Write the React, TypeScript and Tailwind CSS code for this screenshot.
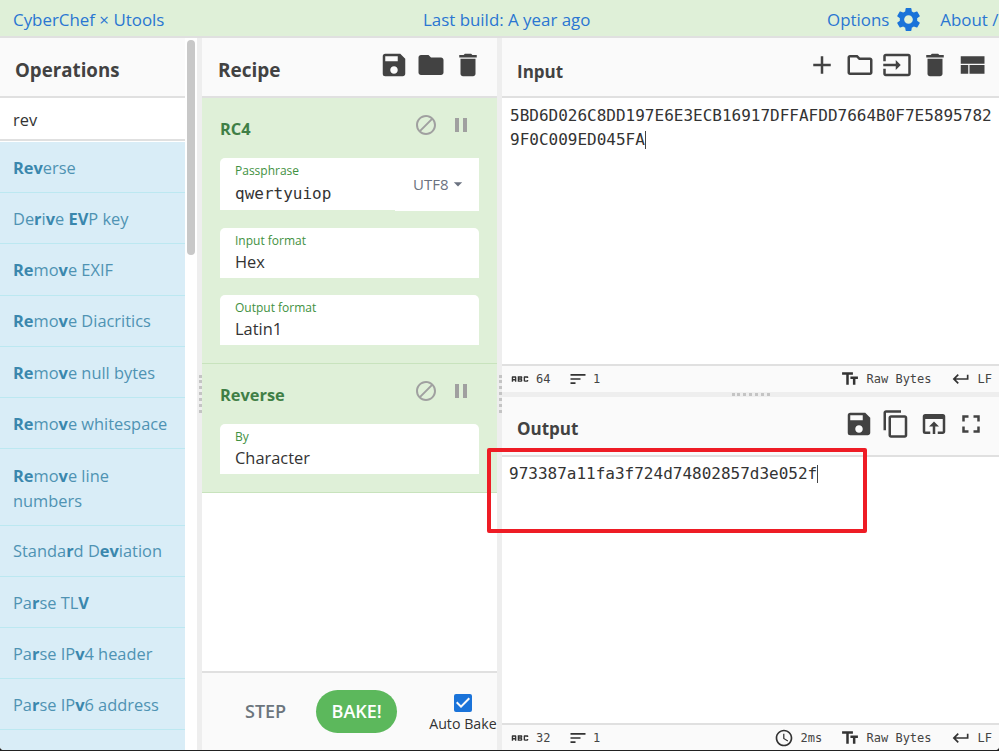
import {
  MdAbc,
  MdAccessTime,
  MdAdd,
  MdArrowDropDown,
  MdBlock,
  MdCheckBox,
  MdContentCopy,
  MdDelete,
  MdFolder,
  MdFullscreen,
  MdInput,
  MdKeyboardReturn,
  MdOpenInBrowser,
  MdOutlineFolder,
  MdPause,
  MdSave,
  MdSettings,
  MdSort,
  MdTextFields,
} from "react-icons/md";

const ops: { parts: [string, boolean][]; tall?: boolean }[] = [
  { parts: [["Rev", true], ["erse", false]] },
  { parts: [["De", false], ["r", true], ["i", false], ["v", true], ["e ", false], ["EV", true], ["P key", false]] },
  { parts: [["Re", true], ["mo", false], ["v", true], ["e EXIF", false]] },
  { parts: [["Re", true], ["mo", false], ["v", true], ["e Diacritics", false]] },
  { parts: [["Re", true], ["mo", false], ["v", true], ["e null bytes", false]] },
  { parts: [["Re", true], ["mo", false], ["v", true], ["e whitespace", false]] },
  { parts: [["Re", true], ["mo", false], ["v", true], ["e line numbers", false]], tall: true },
  { parts: [["Standa", false], ["r", true], ["d D", false], ["ev", true], ["iation", false]] },
  { parts: [["Pa", false], ["r", true], ["se TL", false], ["V", true]] },
  { parts: [["Pa", false], ["r", true], ["se IP", false], ["v", true], ["4 header", false]] },
  { parts: [["Pa", false], ["r", true], ["se IP", false], ["v", true], ["6 address", false]] },
  { parts: [] },
];

function Field({ label, value }: { label: string; value: string }) {
  return (
    <div className="h-[50px] rounded-t-[5px] bg-white px-[15px] pt-[5px]">
      <div className="text-[12px] leading-[16px] text-[#3f9142]">{label}</div>
      <div className="text-[16.4px] leading-[26px] text-[#333]">{value}</div>
    </div>
  );
}

function OpHead({ name }: { name: string }) {
  return (
    <div className="flex h-[30px] items-center justify-between pr-[6px] text-[#a0a0a0]">
      <span className="text-[16.4px] font-bold text-[#3f7f46]">{name}</span>
      <div className="-mt-[8px] flex items-center gap-[11px]">
        <MdBlock size={24} />
        <MdPause size={24} />
      </div>
    </div>
  );
}

function Gutter() {
  return (
    <div className="flex w-[5px] shrink-0 items-center bg-[#eeeeee]">
      <div className="ml-[2px] h-[38px] w-[3px] border-l-[3px] border-dotted border-[#c4c4c4]" />
    </div>
  );
}

function ViewQuilt() {
  return (
    <svg width="30" height="30" viewBox="0 0 24 24" fill="currentColor">
      <path d="M3 19h6v-7H3v7zm7 0h12v-7H10v7zM3 5v6h19V5H3z" />
    </svg>
  );
}

export default function App() {
  return (
    <div className="relative h-[751px] w-[999px] overflow-hidden bg-[#222] font-['Open_Sans',sans-serif] text-[#333]">
      <div className="flex h-[750px] flex-col overflow-hidden rounded-b-[4px] bg-white">
        {/* top bar */}
        <div className="flex h-[38px] shrink-0 items-center border-b-2 border-[#e0e0e0] bg-[#dff0d8] pl-[13px] pt-[3px] text-[16.9px] text-[#2a76d2]">
          <span className="w-[410px]">CyberChef × Utools</span>
          <span className="w-[404px]">Last build: A year ago</span>
          <span>Options</span>
          <MdSettings size={29} className="ml-[5px] text-[#1a73d9]" />
          <span className="ml-[17px] whitespace-nowrap">About /</span>
        </div>

        <div className="flex min-h-0 flex-1">
          {/* operations */}
          <div className="flex w-[197px] shrink-0">
            <div className="flex w-[185px] shrink-0 flex-col">
              <div className="flex h-[60px] shrink-0 items-center border-b-2 border-[#e0e0e0] bg-[#fafafa] pl-[15px] pt-[6px] text-[18.7px] font-bold text-[#424242]">
                Operations
              </div>
              <div className="flex h-[43px] shrink-0 items-center border-b-2 border-[#e0e0e0] bg-white pl-[13px] pt-[4px] text-[16.4px]">
                rev
              </div>
              <div className="mt-[1px]">
                {ops.map((op, i) => (
                  <div
                    key={i}
                    className={
                      op.tall
                        ? "h-[76.5px] border-b border-[#bce8f1] bg-[#d9edf7] px-[13px] pt-[14px] text-[16.4px] leading-[25px] text-[#4f93b3]"
                        : "flex h-[51.2px] items-center border-b border-[#bce8f1] bg-[#d9edf7] px-[13px] pt-[2px] text-[16.4px] text-[#4f93b3]"
                    }
                  >
                    <span className="whitespace-pre-wrap">
                      {op.parts.map(([text, bold], j) =>
                        bold ? (
                          <b key={j} className="font-bold text-[#3a87ad]">{text}</b>
                        ) : (
                          <span key={j}>{text}</span>
                        ),
                      )}
                    </span>
                  </div>
                ))}
              </div>
            </div>
            <div className="ml-[2px] mt-[2px] h-[215px] w-[8px] rounded-[4px] bg-[#c8c8c8]" />
          </div>

          <Gutter />

          {/* recipe */}
          <div className="flex w-[295px] shrink-0 flex-col">
            <div className="flex h-[60px] shrink-0 items-center justify-between border-b-2 border-[#e0e0e0] bg-[#fafafa] pl-[16px] pr-[14px] text-[#424242]">
              <span className="mt-[6px] text-[19px] font-bold">Recipe</span>
              <div className="-mt-[5px] flex gap-[7px]">
                <MdSave size={30} />
                <MdFolder size={30} />
                <MdDelete size={30} />
              </div>
            </div>
            <div className="border-b border-[#c8e3bd] bg-[#dff0d8] px-[18px] pb-[18px] pt-[16px]">
              <OpHead name="RC4" />
              <div className="relative mt-[14px]">
                <div className="h-[52px] rounded-tl-[5px] bg-white pl-[15px] pt-[5px]">
                  <div className="text-[12px] leading-[16px] text-[#3f9142]">Passphrase</div>
                  <div className="font-['DejaVu_Sans_Mono',monospace] text-[16px] leading-[30px] text-[#333]">qwertyuiop</div>
                </div>
                <div className="absolute right-0 top-0 flex h-[53px] w-[84px] items-center rounded-tr-[5px] bg-white pb-[1px] pl-[18px] text-[15px] text-[#6b7280]">
                  UTF8
                  <MdArrowDropDown size={20} className="-ml-[1px]" />
                </div>
              </div>
              <div className="mt-[18px] flex flex-col gap-[17px]">
                <Field label="Input format" value="Hex" />
                <Field label="Output format" value="Latin1" />
              </div>
            </div>
            <div className="border-b border-[#c8e3bd] bg-[#dff0d8] px-[18px] pb-[18px] pt-[16px]">
              <OpHead name="Reverse" />
              <div className="mt-[14px]">
                <Field label="By" value="Character" />
              </div>
            </div>
            <div className="flex-1" />
            <div className="flex h-[79px] shrink-0 items-center border-t-2 border-[#e0e0e0] bg-[#fafafa]">
              <span className="ml-[43px] text-[18px] font-semibold text-[#6c757d]">STEP</span>
              <span className="ml-[30px] flex h-[43px] w-[81px] items-center justify-center rounded-full bg-[#5cb85c] text-[18px] font-semibold text-white">
                BAKE!
              </span>
              <div className="ml-[32px] flex flex-col items-center">
                <MdCheckBox size={24} className="text-[#1a73d9]" />
                <span className="whitespace-nowrap text-[14.2px] leading-[18px] text-[#333]">Auto Bake</span>
              </div>
            </div>
          </div>

          <Gutter />

          {/* input + output */}
          <div className="flex min-w-0 flex-1 flex-col">
            <div className="flex h-[60px] shrink-0 items-center justify-between border-b-2 border-[#e0e0e0] bg-[#fafafa] pl-[15px] pr-[12px] text-[#424242]">
              <span className="mt-[9px] text-[17px] font-bold">Input</span>
              <div className="-mt-[4px] flex gap-[7.5px]">
                <MdAdd size={30} />
                <MdOutlineFolder size={30} />
                <MdInput size={30} />
                <MdDelete size={30} />
                <ViewQuilt />
              </div>
            </div>
            <div className="h-[266px] shrink-0 bg-white pl-[8px] pr-[6px] pt-[6px] font-['DejaVu_Sans_Mono',monospace] text-[16px] leading-[24px] text-[#333]">
              <div className="break-all">
                5BD6D026C8DD197E6E3ECB16917DFFAFDD7664B0F7E58957829F0C009ED045FA
                <span className="inline-block h-[18px] w-px align-[-4px] bg-[#444]" />
              </div>
            </div>
            <div className="flex h-[28px] shrink-0 items-center border-t-2 border-[#e0e0e0] bg-[#fafafa] pl-[7px] pr-[7px] font-['DejaVu_Sans_Mono',monospace] text-[12px] text-[#444]">
              <MdAbc size={22} className="text-[#333]" />
              <span className="ml-[5px] w-[32px]">64</span>
              <MdSort size={20} className="text-[#333]" />
              <span className="ml-[5px]">1</span>
              <div className="flex-1" />
              <MdTextFields size={20} className="text-[#333]" />
              <span className="ml-[7px]">Raw Bytes</span>
              <MdKeyboardReturn size={20} className="ml-[19px] text-[#333]" />
              <span className="ml-[7px]">LF</span>
            </div>
            <div className="relative flex h-[5px] shrink-0 items-start justify-center bg-[#eeeeee]">
              <div className="mt-[1px] h-[3px] w-[38px] border-t-[3px] border-dotted border-[#c4c4c4]" />
            </div>
            <div className="flex h-[60px] shrink-0 items-center justify-between border-b-2 border-[#e0e0e0] bg-[#fafafa] pl-[15px] pr-[13px] text-[#424242]">
              <span className="mt-[6px] text-[17px] font-bold">Output</span>
              <div className="-mt-[4px] flex gap-[7.5px]">
                <MdSave size={30} />
                <MdContentCopy size={30} />
                <MdOpenInBrowser size={30} />
                <MdFullscreen size={30} />
              </div>
            </div>
            <div className="flex-1 bg-white px-[7px] pt-[5px] font-['DejaVu_Sans_Mono',monospace] text-[16px] leading-[24px] text-[#333]">
              973387a11fa3f724d74802857d3e052f
              <span className="inline-block h-[18px] w-px align-[-4px] bg-[#444]" />
            </div>
            <div className="flex h-[27px] shrink-0 items-center border-t-2 border-[#e0e0e0] bg-[#fafafa] pl-[7px] pr-[7px] font-['DejaVu_Sans_Mono',monospace] text-[12px] text-[#444]">
              <MdAbc size={22} className="text-[#333]" />
              <span className="ml-[5px] w-[32px]">32</span>
              <MdSort size={20} className="text-[#333]" />
              <span className="ml-[5px]">1</span>
              <div className="flex-1" />
              <MdAccessTime size={20} className="text-[#333]" />
              <span className="ml-[7px] w-[39px]">2ms</span>
              <MdTextFields size={20} className="text-[#333]" />
              <span className="ml-[7px]">Raw Bytes</span>
              <MdKeyboardReturn size={20} className="ml-[19px] text-[#333]" />
              <span className="ml-[7px]">LF</span>
            </div>
          </div>
        </div>
      </div>

      {/* red annotation rectangle */}
      <div className="absolute left-[487px] top-[448px] h-[85px] w-[380px] rounded-[2px] border-[4px] border-[#ee1c25]" />
    </div>
  );
}
